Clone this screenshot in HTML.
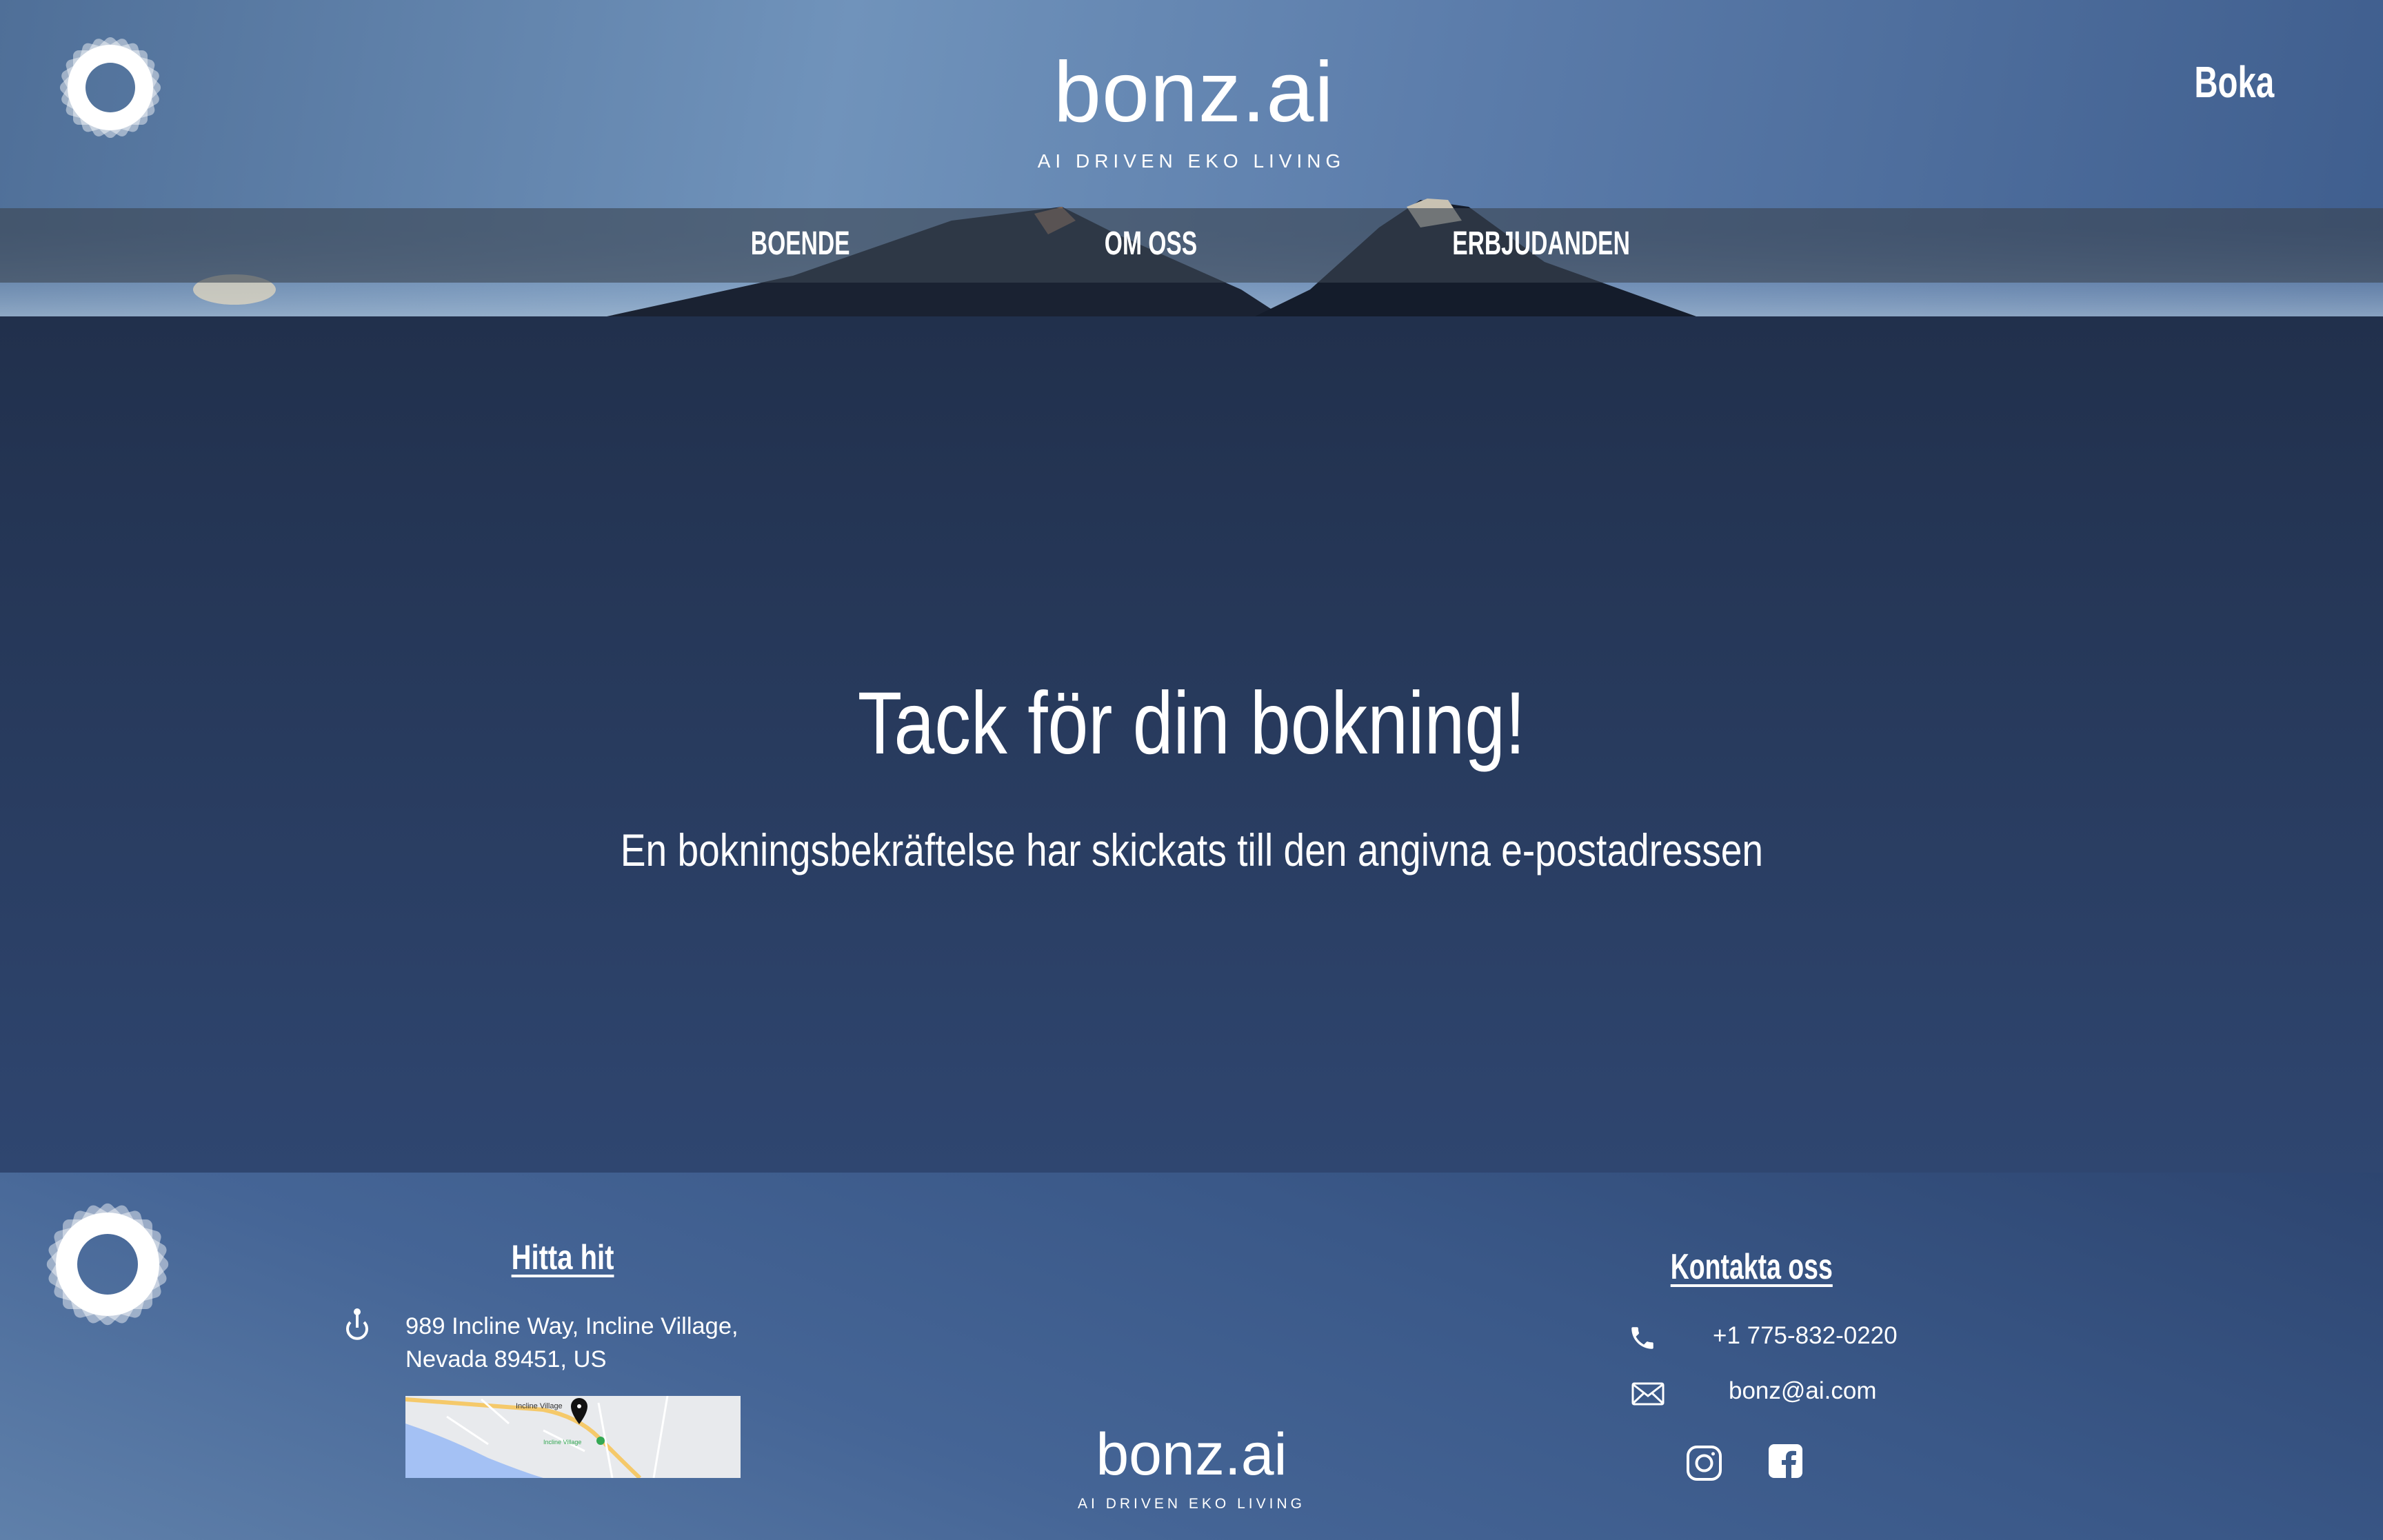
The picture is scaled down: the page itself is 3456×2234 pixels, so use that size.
<!DOCTYPE html>
<html><head><meta charset="utf-8"><style>
*{margin:0;padding:0;box-sizing:border-box}
body{width:3456px;height:2234px;overflow:hidden;position:relative;font-family:"Liberation Sans",sans-serif;color:#fff}
.abs{position:absolute}
.c{position:absolute;white-space:nowrap;transform-origin:center center}
.cond{display:inline-block;transform:scaleX(.78);}
#hdr{left:0;top:0;width:3456px;height:459px;background:linear-gradient(100deg,#4f6f98 0%,#7093bb 35%,#5c7dab 60%,#3f5e8e 100%)}
#main{left:0;top:459px;width:3456px;height:1242px;background:linear-gradient(180deg,#21304c 0%,#2f4670 100%)}
#ftr{left:0;top:1701px;width:3456px;height:533px;background:linear-gradient(20deg,#5f80aa 0%,#456596 35%,#3a5888 65%,#2d4570 100%)}
</style></head><body>
<div id="hdr" class="abs"></div>
<svg class="abs" style="left:0;top:0" width="3456" height="459">
 <defs><linearGradient id="lo" x1="0" y1="0" x2="0" y2="1"><stop offset="0" stop-color="#6f8fb8" stop-opacity="0"/><stop offset="1" stop-color="#a8bfd6" stop-opacity=".7"/></linearGradient></defs>
 <rect x="0" y="330" width="3456" height="129" fill="url(#lo)"/>
 <polygon points="880,459 1150,400 1380,320 1540,300 1620,340 1800,420 1860,459" fill="#1a2232"/>
 <polygon points="1820,459 1900,420 2000,330 2060,290 2130,300 2240,380 2460,459" fill="#141c2b"/>
 <polygon points="2040,300 2070,288 2100,290 2120,320 2060,330" fill="#c9c2b2"/>
 <polygon points="1500,310 1540,300 1560,320 1520,340" fill="#8a6a55"/>
 <ellipse cx="340" cy="420" rx="60" ry="22" fill="#e8dcc0" opacity=".7"/>
</svg>
<div class="abs" style="left:0;top:302px;width:3456px;height:108px;background:rgba(60,70,82,.62)"></div>
<svg class="abs" style="left:80px;top:47px" width="160" height="160" viewBox="-80 -80 160 160">
 <defs><mask id="m1"><rect x="-80" y="-80" width="160" height="160" fill="#fff"/><circle r="36" fill="#000"/></mask></defs>
 <g mask="url(#m1)">
  <g fill="#fff" fill-opacity=".45">
   <rect x="-54" y="-54" width="108" height="108" rx="8"/>
   <rect x="-54" y="-54" width="108" height="108" rx="8" transform="rotate(15)"/>
   <rect x="-54" y="-54" width="108" height="108" rx="8" transform="rotate(30)"/>
   <rect x="-54" y="-54" width="108" height="108" rx="8" transform="rotate(45)"/>
   <rect x="-54" y="-54" width="108" height="108" rx="8" transform="rotate(60)"/>
   <rect x="-54" y="-54" width="108" height="108" rx="8" transform="rotate(75)"/>
  </g>
  <circle r="62" fill="#fff"/>
 </g>
</svg>
<div class="c" style="left:1528px;top:64px;width:400px;text-align:center;font-size:124px;line-height:140px;letter-spacing:1px">bonz.ai</div>
<div class="c" style="left:1428px;top:218px;width:600px;text-align:center;font-size:28px;letter-spacing:7px">AI DRIVEN EKO LIVING</div>
<div class="c" style="left:3140px;top:82px;width:200px;text-align:center;font-size:64px;font-weight:bold"><span class="cond" style="transform:scaleX(.74)">Boka</span></div>
<div class="c" style="left:1011px;top:326px;width:300px;text-align:center;font-size:48px;font-weight:bold"><span class="cond" style="transform:scaleX(.7)">BOENDE</span></div>
<div class="c" style="left:1519px;top:326px;width:300px;text-align:center;font-size:48px;font-weight:bold"><span class="cond" style="transform:scaleX(.7)">OM OSS</span></div>
<div class="c" style="left:1985px;top:326px;width:500px;text-align:center;font-size:48px;font-weight:bold"><span class="cond" style="transform:scaleX(.7)">ERBJUDANDEN</span></div>

<div id="main" class="abs"></div>
<div class="c" style="left:0;top:980px;width:3456px;text-align:center;font-size:128px;line-height:140px"><span class="cond" style="transform:scaleX(.825)">Tack för din bokning!</span></div>
<div class="c" style="left:0;top:1195px;width:3456px;text-align:center;font-size:66px;line-height:76px"><span class="cond" style="transform:scaleX(.835)">En bokningsbekräftelse har skickats till den angivna e-postadressen</span></div>

<div id="ftr" class="abs"></div>
<svg class="abs" style="left:66px;top:1744px" width="180" height="180" viewBox="-90 -90 180 180">
 <defs><mask id="m2"><rect x="-90" y="-90" width="180" height="180" fill="#fff"/><circle r="44" fill="#000"/></mask></defs>
 <g mask="url(#m2)">
  <g fill="#fff" fill-opacity=".45">
   <rect x="-65" y="-65" width="130" height="130" rx="9"/>
   <rect x="-65" y="-65" width="130" height="130" rx="9" transform="rotate(15)"/>
   <rect x="-65" y="-65" width="130" height="130" rx="9" transform="rotate(30)"/>
   <rect x="-65" y="-65" width="130" height="130" rx="9" transform="rotate(45)"/>
   <rect x="-65" y="-65" width="130" height="130" rx="9" transform="rotate(60)"/>
   <rect x="-65" y="-65" width="130" height="130" rx="9" transform="rotate(75)"/>
  </g>
  <circle r="75" fill="#fff"/>
 </g>
</svg>
<div class="c" style="left:616px;top:1795px;width:400px;text-align:center;font-size:50px;font-weight:bold"><span class="cond" style="transform:scaleX(.8);text-decoration:underline;text-decoration-thickness:4px;text-underline-offset:8px">Hitta hit</span></div>
<svg class="abs" style="left:496px;top:1896px" width="44" height="50" viewBox="0 0 44 50" fill="none" stroke="#fff" stroke-width="4">
 <circle cx="22" cy="7" r="5" fill="#fff" stroke="none"/>
 <path d="M22 10 V30"/>
 <path d="M12 22 A14 14 0 1 0 32 22"/>
</svg>
<div class="abs" style="left:588px;top:1900px;font-size:34.5px;line-height:48px;white-space:nowrap">989 Incline Way, Incline Village,<br>Nevada 89451, US</div>
<svg class="abs" style="left:588px;top:2025px" width="486" height="119" viewBox="0 0 486 119">
 <rect width="486" height="119" fill="#e8eaed"/>
 <path d="M0 40 Q60 60 120 90 Q170 110 200 119 L0 119 Z" fill="#a4c1f4"/>
 <path d="M0 5 L200 20 Q250 30 280 60 Q320 100 340 119" stroke="#f5c96a" stroke-width="6" fill="none"/>
 <path d="M110 5 L150 40 M60 30 L120 70 M200 50 L260 80 M280 10 L300 119 M380 0 L360 119" stroke="#fff" stroke-width="3" fill="none"/>
 <path d="M240 15 a12 12 0 1 1 24 0 q0 10 -12 26 q-12 -16 -12 -26z" fill="#111"/>
 <circle cx="252" cy="15" r="3" fill="#fff"/>
 <circle cx="283" cy="65" r="6" fill="#34a853"/>
 <text x="160" y="18" font-size="11" fill="#333" font-family="Liberation Sans">Incline Village</text>
 <text x="200" y="70" font-size="9" fill="#34a853" font-family="Liberation Sans">Incline Village</text>
</svg>
<div class="c" style="left:1528px;top:2060px;width:400px;text-align:center;font-size:86px;line-height:100px">bonz.ai</div>
<div class="c" style="left:1428px;top:2170px;width:600px;text-align:center;font-size:21px;letter-spacing:5px">AI DRIVEN EKO LIVING</div>
<div class="c" style="left:2340px;top:1808px;width:400px;text-align:center;font-size:52px;font-weight:bold"><span class="cond" style="transform:scaleX(.72);text-decoration:underline;text-decoration-thickness:4px;text-underline-offset:8px">Kontakta oss</span></div>
<svg class="abs" style="left:2361px;top:1919px" width="42" height="44" viewBox="0 0 24 24" fill="#fff"><path d="M6.6 10.8c1.4 2.8 3.8 5.1 6.6 6.6l2.2-2.2c.3-.3.7-.4 1-.2 1.1.4 2.3.6 3.6.6.6 0 1 .4 1 1V20c0 .6-.4 1-1 1C10.6 21 3 13.4 3 4c0-.6.4-1 1-1h3.5c.6 0 1 .4 1 1 0 1.3.2 2.5.6 3.6.1.3 0 .7-.2 1z"/></svg>
<div class="abs" style="left:2484px;top:1918px;font-size:35px;white-space:nowrap">+1 775-832-0220</div>
<svg class="abs" style="left:2366px;top:2005px" width="48" height="34" viewBox="0 0 48 34" fill="none" stroke="#fff" stroke-width="3"><rect x="2" y="2" width="44" height="30" rx="2"/><path d="M2 3 L24 20 L46 3 M2 31 L18 16 M46 31 L30 16"/></svg>
<div class="abs" style="left:2507px;top:1998px;font-size:35px;white-space:nowrap">bonz@ai.com</div>
<svg class="abs" style="left:2446px;top:2097px" width="51" height="51" viewBox="0 0 51 51" fill="none" stroke="#fff" stroke-width="4"><rect x="2" y="2" width="47" height="47" rx="13"/><circle cx="25.5" cy="25.5" r="11"/><circle cx="38.5" cy="12" r="2.5" fill="#fff" stroke="none"/></svg>
<svg class="abs" style="left:2565px;top:2095px" width="49" height="49" viewBox="0 0 49 49"><rect width="49" height="49" rx="8" fill="#fff"/><path d="M33 49 V30 h6 l1-7 h-7 v-4 c0-2 1-3 3-3 h4 V10 c-1 0-3-.3-6-.3 -6 0-9 3.5-9 9 V23 h-6 v7 h6 v19z" fill="#3e5d8c"/></svg>
</body></html>
